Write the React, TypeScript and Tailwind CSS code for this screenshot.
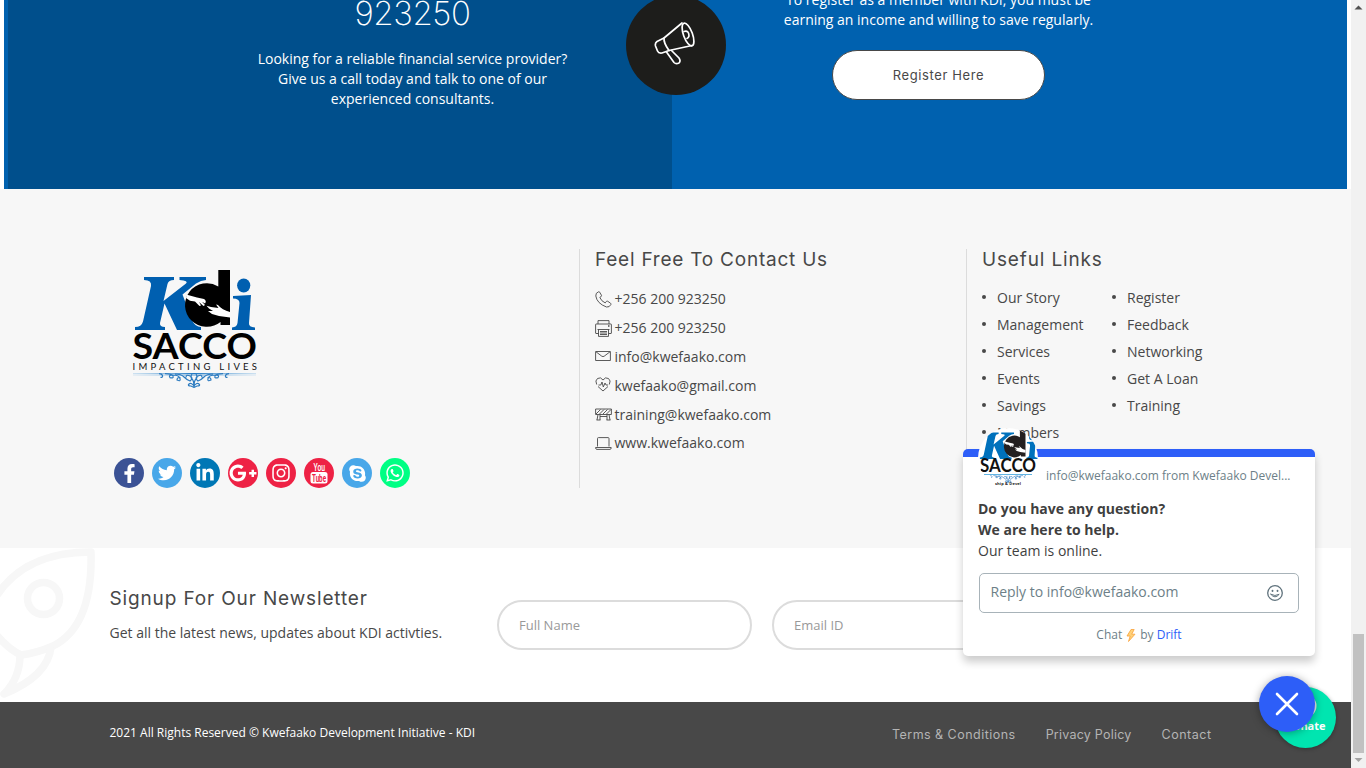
import React from "react";
import {
  FaFacebookF,
  FaTwitter,
  FaLinkedinIn,
  FaGooglePlusG,
  FaInstagram,
  FaSkype,
  FaWhatsapp,
} from "react-icons/fa";

function Ornament() {
  return (
    <g fill="none" stroke="#2e7cc0" strokeWidth="1.2">
      <path d="M29 124.600q3 0 3.500 2t-2 1.800M35 124.600q7 0 8 2.500t-3 1.500q-2-3 3-2.600q6 0 7 3.500t-3 1.500q0-3 3.500-2.500M45 125q6 0 9 3t6 4q4-3 0-5t-4 1.500M62 125q-2 3 0 5t2 7q-3-4-5-2t2 2l3 1.500" />
      <path d="M99 124.600q-3 0-3.500 2t2 1.800M93 124.600q-7 0-8 2.500t3 1.500q2-3-3-2.600q-6 0-7 3.500t3 1.500q0-3-3.500-2.500M83 125q-6 0-9 3t-6 4q-4-3 0-5t4 1.500M66 125q2 3 0 5t-2 7q3-4 5-2t-2 2l-3 1.500" />
    </g>
  );
}

function LogoArt({ blue, dark }: { blue: string; dark: string }) {
  return (
    <>
      <path
        fill={blue}
        d="M14 28H44V31Q38.500 31 37.500 35L33.500 52L56 34.500Q59 31.500 49.500 31V28H76V31Q71 31 66 34.500L52.500 45.500L62 71Q65 78 71 78V81H47L34.500 54.500L30 74Q29.500 78 35 78V81H5V78Q11.500 78 13 72.500L21 37Q22 31 14 31Z"
      />
      <path fill={dark} d="M88.300 21H100V76H90.500V73A21.800 21.800 0 1 1 88.300 37.500Z" />
      <path
        fill="#fff"
        d="M57 45.800L67 48.500L74 50Q77 52 75 54.500L72 52.800L75 56L73.500 57L69 53L71 56.500L69.500 57L65 52.500L60 51.800L56 49ZM100 63Q92 61 88 56L86 55.500L88.500 59L81 58L76.500 56.800L79 59.500L83 62L78 62L82 65L89 67L100 68.500Z"
      />
      <path d="M103 47L121 46L119 74Q118.500 78 125 78.500V81H102V78.500Q107 78 107.500 74L109.500 54Q109.500 49.500 103 49.500Z" fill={blue} />
      <ellipse cx="113.700" cy="36.500" rx="6.600" ry="7" fill={blue} />
    </>
  );
}

function Logo() {
  return (
    <svg width="132" height="145" viewBox="0 0 132 145" className="block">
      <defs>
        <linearGradient id="rule" x1="0" x2="1" y1="0" y2="0">
          <stop offset="0" stopColor="#8fc0e6" stopOpacity=".4" />
          <stop offset=".5" stopColor="#1f78c4" />
          <stop offset="1" stopColor="#8fc0e6" stopOpacity=".4" />
        </linearGradient>
      </defs>
      <LogoArt blue="#005fb0" dark="#000" />
      <text x="2.500" y="109.800" fontFamily="Lato, sans-serif" fontWeight="700" fontSize="35.500" textLength="124.500" lengthAdjust="spacingAndGlyphs">SACCO</text>
      <text x="2.500" y="121" fontFamily="Lato, sans-serif" fontSize="9.500" textLength="124.500" fill="#111">IMPACTING LIVES</text>
      <rect x="3" y="124" width="123" height="1" fill="url(#rule)" />
      <rect x="3" y="125.600" width="123" height=".8" fill="url(#rule)" />
      <Ornament />
    </svg>
  );
}

function Megaphone() {
  return (
    <svg width="42" height="44" viewBox="0 0 42 44" fill="none" stroke="#fff" strokeWidth="1.700" strokeLinejoin="round" strokeLinecap="round">
      <path d="M28 2L10 17L3 20.500Q.8 22 1.500 25L3.500 30Q4.500 32.500 8 32L15 29.500L38 24.500" />
      <path d="M10 17Q9.500 22 15 29.500" />
      <ellipse cx="34" cy="13.500" rx="4.500" ry="12" transform="rotate(-20 34 13.500)" />
      <path d="M30 10.500Q35 9 35 15Q34.500 17 33 17.500" />
      <path d="M12.500 31L20 41.500Q22 43.500 25 42Q27 40 25 37L17.500 29.500" />
    </svg>
  );
}

type IconName = "phone" | "printer" | "mail" | "heart" | "barrier" | "laptop";

function LineIcon({ name }: { name: IconName }) {
  return (
    <svg width="17" height="17" viewBox="0 0 17 17" fill="none" stroke="#484848" strokeWidth="0.9" className="block shrink-0">
      {name === "phone" && (
        <path d="M3.500.8Q.5 1.800.8 5Q2 12.500 11.500 16Q14.500 16.500 15.900 13.500Q16.200 12.800 15.500 12.200L12.600 10.200Q11.900 9.800 11.300 10.500L10.200 11.900Q6.300 10.200 4.800 6.400L6.200 5.500Q6.800 5 6.400 4.200L4.700 1.200Q4.200.6 3.500.8Z" />
      )}
      {name === "printer" && (
        <>
          <path d="M3 4V.6H14V4M3.500 13.500H1Q.6 13.500.6 13V4.500Q.6 4 1 4H16Q16.400 4 16.400 4.500V13Q16.400 13.500 16 13.500H13.500M2.500 9.500H14.500M3.500 9.500V16.400H13.500V9.500M5 11.500H12M5 13H12M5 14.500H12" />
          <path d="M13 6H14.500" strokeWidth="1.300" />
        </>
      )}
      {name === "mail" && <path d="M.6 3.500H15.400V12.500H.6ZM1 3.800L6.800 8.200Q8 9 9.200 8.200L15 3.800" />}
      {name === "heart" && (
        <path d="M1.700 7.500Q-.3 3.500 2.500 1.500Q5.800-.5 8 3Q10.200-.5 13.500 1.500Q16.300 3.500 14.300 7.500M3 9.500L8 14L13 9.500M3.500 8H5.800L7 5L8.300 10L10 6L11 8H13" />
      )}
      {name === "barrier" && (
        <path d="M.6 3H16.400V8.500H.6ZM1 8L5.500 3.500M4.500 8L9 3.500M8 8L12.500 3.500M11.500 8L16 3.500M3 8.500L2 14M5 8.500V14M12 8.500V14M14 8.500L15 14M1.500 14H5.500M11.500 14H15.500M5 10.500H12" />
      )}
      {name === "laptop" && <path d="M2.500 11.500V3.500Q2.500 2.600 3.500 2.600H13Q14 2.600 14 3.500V11.500M.6 12.500H16.200V13Q16 14.400 15 14.400H2Q.8 14.400.6 13Z" />}
    </svg>
  );
}

const contacts: { icon: IconName; text: string }[] = [
  { icon: "phone", text: "+256 200 923250" },
  { icon: "printer", text: "+256 200 923250" },
  { icon: "mail", text: "info@kwefaako.com" },
  { icon: "heart", text: "kwefaako@gmail.com" },
  { icon: "barrier", text: "training@kwefaako.com" },
  { icon: "laptop", text: "www.kwefaako.com" },
];

const socials = [
  { bg: "bg-[#3b5295]", icon: <FaFacebookF size={19} /> },
  { bg: "bg-[#48a7e9]", icon: <FaTwitter size={18} /> },
  { bg: "bg-[#0077b5]", icon: <FaLinkedinIn size={20} /> },
  { bg: "bg-[#ee2245]", icon: <FaGooglePlusG size={28} /> },
  { bg: "bg-[#ee2245]", icon: <FaInstagram size={20} /> },
  { bg: "bg-[#ee2245]", icon: <YouTubeMark /> },
  { bg: "bg-[#48a7e9]", icon: <FaSkype size={19} /> },
  { bg: "bg-[#00ff84]", icon: <FaWhatsapp size={20} /> },
];

function YouTubeMark() {
  return (
    <svg width="18" height="22" viewBox="0 0 18 22">
      <text x="3.500" y="8.500" fontFamily="Roboto, sans-serif" fontWeight="500" fontSize="11" textLength="11.500" lengthAdjust="spacingAndGlyphs" fill="#fff">You</text>
      <rect x=".5" y="10" width="17" height="11.500" rx="2.500" fill="#fff" />
      <text x="2" y="19.700" fontFamily="Roboto, sans-serif" fontWeight="700" fontSize="10.500" textLength="14" lengthAdjust="spacingAndGlyphs" fill="#ee2245">Tube</text>
    </svg>
  );
}

function LinkList({ items, width }: { items: string[]; width: string }) {
  return (
    <ul className={width}>
      {items.map((t) => (
        <li key={t} className="flex h-[27px] items-center text-sm">
          <span className="mr-[11px] mb-px size-1 rounded-full bg-[#484848]" />
          {t}
        </li>
      ))}
    </ul>
  );
}

function Rocket() {
  return (
    <svg width="95" height="154" viewBox="0 0 95 154" className="absolute top-0 left-0" fill="none" stroke="#f7f7f7" strokeWidth="7.500" strokeLinejoin="round">
      <path d="M-6 52Q22 4 91 4Q93 78 53 98Q37 105 21 107Q8 101-6 84" />
      <circle cx="43.500" cy="50.500" r="16" />
      <path d="M20 107Q20 130 4 146Q48 128 51 99" />
    </svg>
  );
}

function ChatWidget() {
  return (
    <div className="absolute top-[449px] left-[963px] h-[207px] w-[352px] rounded-[5px] border-t-8 border-[#2d5ef8] bg-white px-[15px] text-[#3f3f3f] shadow-[0_6px_8px_rgba(0,0,0,0.2)]">
      <svg width="60" height="60" viewBox="0 0 60 60" className="absolute -top-[29px] left-[15px]">
        <defs>
          <clipPath id="avatar"><circle cx="30" cy="30" r="30" /></clipPath>
        </defs>
        <g clipPath="url(#avatar)">
          <rect width="60" height="60" fill="#fff" />
          <g transform="translate(-.5 -9.500) scale(.48 .5)"><LogoArt blue="#0071bc" dark="#231f20" /></g>
          <text x="2" y="44.300" fontFamily="Lato, sans-serif" fontWeight="700" fontSize="18" textLength="56" lengthAdjust="spacingAndGlyphs" fill="#111">SACCO</text>
          <path d="M6 46.500H54" stroke="#61b4e3" />
          <g transform="translate(-2.500 -16) scale(.51)"><Ornament /></g>
          <text x="17" y="57" fontFamily="Open Sans, sans-serif" fontWeight="700" fontSize="4" textLength="26" fill="#222">ship &amp; Devel</text>
        </g>
      </svg>
      <div className="ml-[68px] pt-[10px] text-xs leading-[18px] text-[#6d7f88]">info@kwefaako.com from Kwefaako Devel...</div>
      <div className="mt-[13px] text-sm leading-[21px]">
        <p className="font-bold">Do you have any question?</p>
        <p className="font-bold">We are here to help.</p>
        <p>Our team is online.</p>
      </div>
      <div className="mt-[12px] ml-px flex h-10 w-[320px] items-center justify-between rounded-[5px] border border-[#a8b3b9] pr-[15px] pl-[10.500px] text-sm text-[#6d7f88]">
        <span className="pb-[2px]">Reply to info@kwefaako.com</span>
        <svg width="16" height="16" viewBox="0 0 16 16" fill="none" stroke="#5f727c" strokeWidth="1.300" strokeLinecap="round" className="-mt-px">
          <circle cx="8" cy="8" r="7.300" />
          <path d="M3.800 9.300Q8 14.500 12.200 9.300Q8 11.800 3.800 9.300Z" strokeLinejoin="round" strokeWidth="1" />
          <path d="M5.500 5.600V6M10.500 5.600V6" strokeWidth="1.800" />
        </svg>
      </div>
      <div className="mt-[13px] flex items-center justify-center text-xs leading-[18px] text-[#6d7f88]">
        Chat
        <svg width="10" height="13" viewBox="0 0 10 13" className="mx-1">
          <path d="M5 .5L1 7H4.200L2.500 12.500L9 5.200H5.700L8.200.5Z" fill="#ffd27a" stroke="#f9a13a" strokeWidth=".8" />
        </svg>
        by&nbsp;<span className="text-[#2d5ef8]">Drift</span>
      </div>
    </div>
  );
}

export default function App() {
  return (
    <div className="relative flex h-[768px] w-[1366px] overflow-hidden bg-white font-['Open_Sans',sans-serif] text-[#484848]">
      <main className="flex w-[1351px] shrink-0 flex-col">
        <section className="relative mr-1 ml-1 flex h-[189px] shrink-0 overflow-hidden border-l-4 border-[#0061af] bg-[#0061af] text-center text-sm leading-5 text-white">
          <div className="w-[664px] bg-[#004f8c]">
            <div className="ml-[226px] w-[357px]">
              <div className="-mt-[7px] h-[56px] font-[Inter,sans-serif] text-[33px] leading-10 font-extralight tracking-[-0.4px]">923250</div>
              <p>Looking for a reliable financial service provider?<br />Give us a call today and talk to one of our<br />experienced consultants.</p>
            </div>
          </div>
          <div className="ml-[88px] w-[357px]">
            <p className="-mt-[10px]">To register as a member with KDI, you must be<br />earning an income and willing to save regularly.</p>
            <button className="mt-5 h-[50px] w-[213px] rounded-full border border-[#484848] bg-white font-[Inter,sans-serif] text-[13px] tracking-[0.6px] text-[#484848]">Register Here</button>
          </div>
          <div className="absolute -top-[5px] left-[618px] flex size-[100px] items-center justify-center rounded-full bg-[#1d1d1b] pr-[2px] pb-1">
            <Megaphone />
          </div>
        </section>

        <section className="flex h-[359px] shrink-0 bg-[#f7f7f7] pt-[60px]">
          <div className="w-[579px]">
            <div className="ml-[130px] h-[209px]"><Logo /></div>
            <div className="ml-[114px] flex gap-2">
              {socials.map((s, i) => (
                <a key={i} className={"flex size-[30px] items-center justify-center rounded-full text-white " + s.bg}>{s.icon}</a>
              ))}
            </div>
          </div>
          <div className="h-[239px] w-[387px] border-l border-[#dcdcdc] pl-[15px]">
            <h3 className="font-[Inter,sans-serif] text-[19px] leading-[21px] tracking-[0.77px]">Feel Free To Contact Us</h3>
            <ul className="mt-[15px]">
              {contacts.map((c, i) => (
                <li key={i} className="-ml-[0.500px] flex h-[28.800px] items-center gap-[3px] text-sm">
                  <LineIcon name={c.icon} />
                  {c.text}
                </li>
              ))}
            </ul>
          </div>
          <div className="h-[239px] border-l border-[#dcdcdc] pl-[15px]">
            <h3 className="font-[Inter,sans-serif] text-[19px] leading-[21px] tracking-[0.85px]">Useful Links</h3>
            <div className="mt-[14px] flex">
              <LinkList width="w-[130px]" items={["Our Story", "Management", "Services", "Events", "Savings", "Members"]} />
              <LinkList width="w-[130px]" items={["Register", "Feedback", "Networking", "Get A Loan", "Training"]} />
            </div>
          </div>
        </section>

        <section className="relative flex h-[154px] shrink-0 overflow-hidden">
          <Rocket />
          <div className="relative ml-[109.500px] w-[387.500px] pt-[39px]">
            <h3 className="font-[Inter,sans-serif] text-[19px] leading-6 tracking-[0.86px]">Signup For Our Newsletter</h3>
            <p className="mt-[12px] text-sm leading-5">Get all the latest news, updates about KDI activties.</p>
          </div>
          <div className="mt-[52px] flex gap-5 text-[13px] text-[#999]">
            <div className="flex h-[50px] w-[255px] items-center rounded-full border-2 border-[#dcdcdc] pt-px pl-5">Full Name</div>
            <div className="flex h-[50px] w-[255px] items-center rounded-full border-2 border-[#dcdcdc] pt-px pl-5">Email ID</div>
          </div>
        </section>

        <footer className="flex h-[66px] shrink-0 justify-between bg-[#484848] pr-[139.500px] pl-[109.500px]">
          <p className="mt-[21px] text-xs leading-5 text-white">2021 All Rights Reserved © Kwefaako Development Initiative - KDI</p>
          <nav className="mt-[23px] flex gap-[30px] font-[Inter,sans-serif] text-[12.500px] leading-5 text-[#b4b4b4]">
            <a className="tracking-[0.47px]">Terms &amp; Conditions</a>
            <a className="tracking-[0.23px]">Privacy Policy</a>
            <a className="tracking-[0.5px]">Contact</a>
          </nav>
        </footer>
      </main>

      <aside className="flex w-[15px] flex-col items-center justify-between bg-[#f1f1f1]">
        <svg width="15" height="15" viewBox="0 0 15 15"><path d="M3.500 9.500L7.500 5.500L11.500 9.500Z" fill="#505050" /></svg>
        <div className="flex flex-col items-center">
          <div className="h-[119px] w-[11px] bg-[#c1c1c1]" />
          <svg width="15" height="15" viewBox="0 0 15 15"><path d="M3.500 5L7.500 9L11.500 5Z" fill="#a3a3a3" /></svg>
        </div>
      </aside>

      <ChatWidget />
      <div className="absolute top-[687px] left-[1275px] flex size-[61px] justify-center rounded-full bg-[#00e5b0] pt-[31px] text-[11px] leading-4 font-bold text-white shadow-[0_1px_4px_rgba(0,0,0,0.3)]">
        Donate
        <svg width="24" height="24" viewBox="0 0 24 24" className="absolute top-[7px] left-[18px]" fill="#e3ebe6"><circle cx="12" cy="12" r="11.500" /></svg>
      </div>
      <button className="absolute top-[676px] left-[1259px] flex size-14 items-center justify-center rounded-full bg-[#2d5ef8] shadow-[0_1px_8px_rgba(0,0,0,0.35)]">
        <svg width="24" height="24" viewBox="0 0 24 24" stroke="#fff" strokeWidth="2.600" strokeLinecap="round"><path d="M2 2L22 22M22 2L2 22" /></svg>
      </button>
    </div>
  );
}
